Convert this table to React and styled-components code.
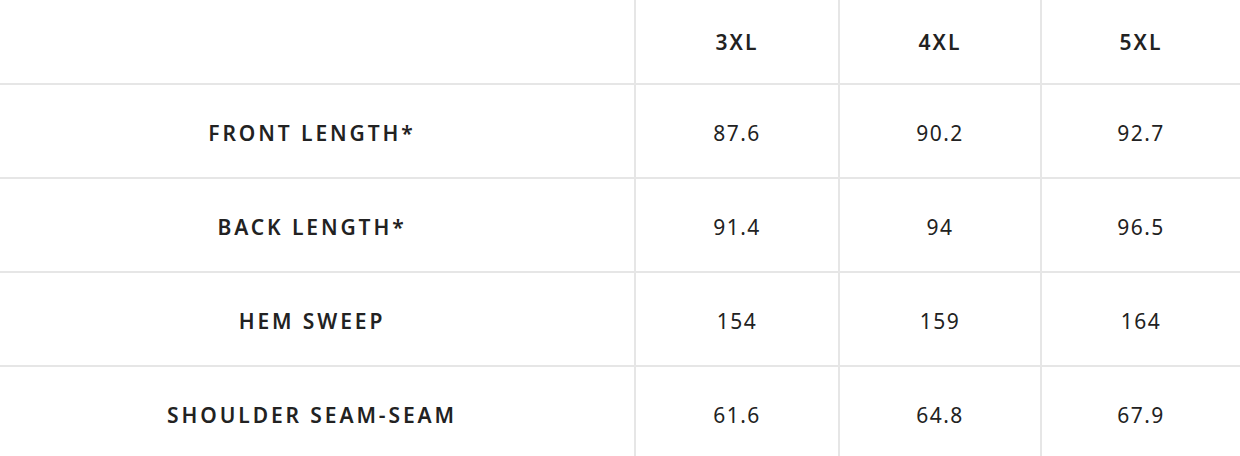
import React from 'react'
import styled, { createGlobalStyle } from 'styled-components'

const GlobalStyle = createGlobalStyle`
  html, body {
    margin: 0;
    padding: 0;
    background: #ffffff;
  }
  body {
    font-family: 'Noto Sans', 'Open Sans', sans-serif;
    color: #222222;
  }
`

const Table = styled.div`
  display: grid;
  grid-template-columns: 634px 202px 200px 1fr;
  grid-template-rows: 83px;
  grid-auto-rows: 92px;
  gap: 2px;
  background: #e6e6e6;
  width: 1240px;
`

const Cell = styled.div`
  background: #ffffff;
  display: flex;
  align-items: center;
  justify-content: center;
  padding-top: ${props => (props.head ? '0' : '4px')};
  box-sizing: border-box;
`

const SizeHead = styled(Cell)`
  font-size: 21px;
  font-weight: 600;
  letter-spacing: 2px;
`

const Label = styled(Cell)`
  font-size: 21px;
  font-weight: 600;
  letter-spacing: 2.9px;
  padding-right: 10px;
`

const Value = styled(Cell)`
  font-size: 21px;
  font-weight: 400;
  letter-spacing: 1.5px;
`

const sizes = ['3XL', '4XL', '5XL']

const rows = [
  { name: 'FRONT LENGTH*', values: ['87.6', '90.2', '92.7'] },
  { name: 'BACK LENGTH*', values: ['91.4', '94', '96.5'] },
  { name: 'HEM SWEEP', values: ['154', '159', '164'] },
  { name: 'SHOULDER SEAM-SEAM', values: ['61.6', '64.8', '67.9'] },
]

const App = () => {
  return (
    <>
      <GlobalStyle />
      <Table>
        <Cell head />
        {sizes.map(s => (
          <SizeHead head key={s}>{s}</SizeHead>
        ))}
        {rows.map(row => (
          <React.Fragment key={row.name}>
            <Label>{row.name}</Label>
            {row.values.map((v, i) => (
              <Value key={i}>{v}</Value>
            ))}
          </React.Fragment>
        ))}
      </Table>
    </>
  )
}

export default App
